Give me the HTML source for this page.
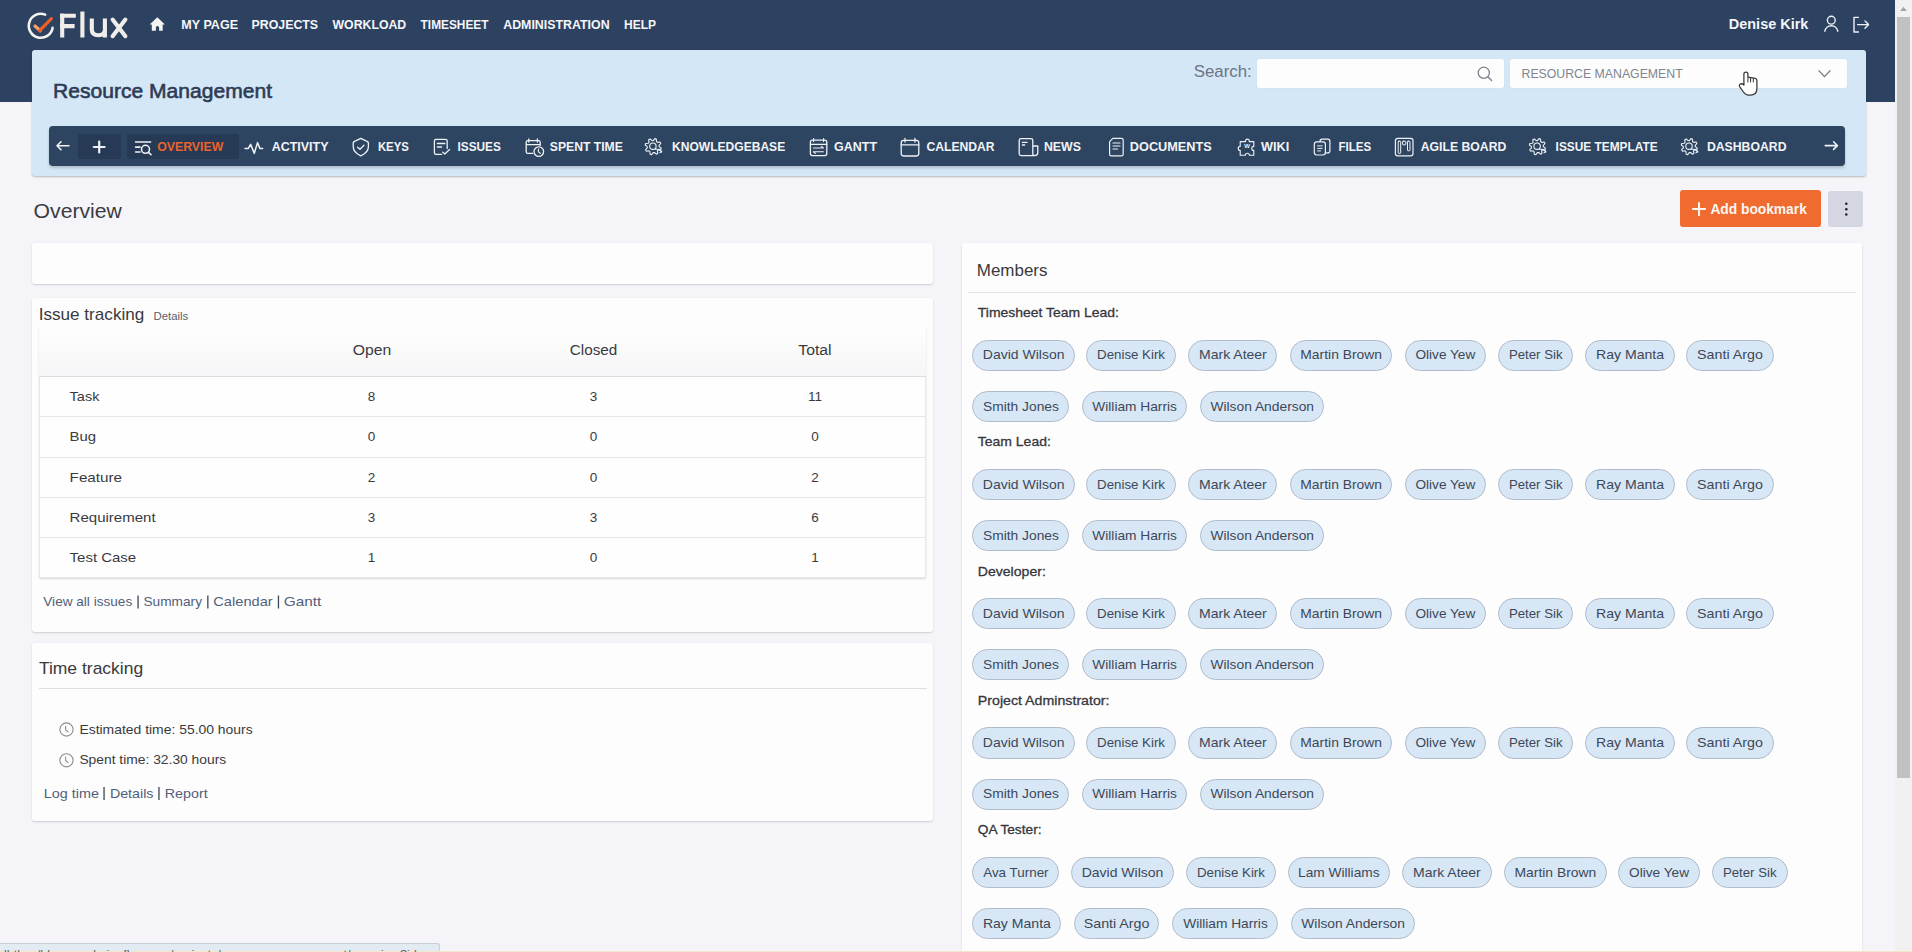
<!DOCTYPE html>
<html><head><meta charset="utf-8"><title>Resource Management - Overview</title>
<style>
html,body{margin:0;padding:0;width:1912px;height:952px;overflow:hidden;background:#f4f4f9;font-family:"Liberation Sans", sans-serif}
.a{position:absolute}
svg text{font-family:"Liberation Sans", sans-serif}
</style></head><body>
<div class="a" style="left:0px;top:0px;width:1895px;height:102px;background:#2d4260"></div>
<div class="a" style="left:32px;top:50px;width:1834px;height:126px;background:#d4e7f7;border-radius:3px;box-shadow:0 1px 2px rgba(0,0,0,.25)"></div>
<div class="a" style="left:1257px;top:58.5px;width:247px;height:29.5px;background:#fdfdfd;border-radius:2px;box-shadow:0 0 1px rgba(0,0,0,.15)"></div>
<div class="a" style="left:1510px;top:58.5px;width:336.5px;height:29.5px;background:#fdfdfd;border-radius:2px;box-shadow:0 0 1px rgba(0,0,0,.15)"></div>
<div class="a" style="left:48.5px;top:126.3px;width:1796.5px;height:39.3px;background:#2e4562;border-radius:4px;box-shadow:0 2px 3px rgba(0,0,0,.18)"></div>
<div class="a" style="left:78.4px;top:134.1px;width:42.4px;height:24.8px;background:#263a55;border-radius:2px"></div>
<div class="a" style="left:127.1px;top:134.1px;width:111.9px;height:24.8px;background:#263a55;border-radius:2px"></div>
<div class="a" style="left:1680px;top:190.3px;width:141px;height:37px;background:#ef6b2f;border-radius:3px"></div>
<div class="a" style="left:1827.6px;top:191px;width:35.1px;height:36.4px;background:#d4d7e2;border-radius:3px"></div>
<div class="a" style="left:32.4px;top:243.3px;width:900.6px;height:41px;background:#fdfdfd;border-radius:3px;box-shadow:0 1px 2px rgba(0,0,0,.16)"></div>
<div class="a" style="left:32.4px;top:297.7px;width:900.6px;height:334px;background:#fdfdfd;border-radius:3px;box-shadow:0 1px 2px rgba(0,0,0,.16)"></div>
<div class="a" style="left:32.4px;top:642.8px;width:900.6px;height:178.7px;background:#fdfdfd;border-radius:3px;box-shadow:0 1px 2px rgba(0,0,0,.16)"></div>
<div class="a" style="left:962px;top:242.8px;width:900px;height:740px;background:#fdfdfd;border-radius:3px;box-shadow:0 1px 2px rgba(0,0,0,.16)"></div>
<div class="a" style="left:39.2px;top:326.6px;width:886.8px;height:251.2px;background:#fefefe;border:1px solid #e8e8ec;box-sizing:border-box;border-radius:2px;box-shadow:0 1px 2px rgba(0,0,0,.16)"></div>
<div class="a" style="left:39.2px;top:326.6px;width:886.8px;height:50px;background:linear-gradient(#fdfdfd,#f6f6f8);border-bottom:1px solid #dcdcdf;box-sizing:border-box"></div>
<div class="a" style="left:39.2px;top:416.3px;width:886.8px;height:1px;background:#e6e6ea"></div>
<div class="a" style="left:39.2px;top:457.2px;width:886.8px;height:1px;background:#e6e6ea"></div>
<div class="a" style="left:39.2px;top:497.3px;width:886.8px;height:1px;background:#e6e6ea"></div>
<div class="a" style="left:39.2px;top:537.3px;width:886.8px;height:1px;background:#e6e6ea"></div>
<div class="a" style="left:39px;top:688.2px;width:887.8px;height:1.2px;background:#dedee3"></div>
<div class="a" style="left:968px;top:291.6px;width:887.7px;height:1.2px;background:#e0e0e5"></div>
<div class="a" style="left:1895px;top:0px;width:17px;height:952px;background:#f1f1f1"></div>
<div class="a" style="left:1897px;top:17px;width:13px;height:761px;background:#c1c1c1"></div>
<div class="a" style="left:0px;top:943px;width:439.5px;height:9px;background:#e2eaf2;border-top:1px solid #c8d0d8;border-right:1px solid #c8d0d8;border-top-right-radius:3px;box-sizing:border-box"></div>
<div class="a" style="left:0px;top:950.5px;width:1912px;height:1.5px;background:#f3e6cc"></div>
<div class="a" style="left:972.1px;top:339.5px;width:103.1px;height:31.2px;background:#d7e7f6;border:1px solid #b0bccb;border-radius:16px;box-sizing:border-box"></div>
<div class="a" style="left:1086.4px;top:339.5px;width:89.3px;height:31.2px;background:#d7e7f6;border:1px solid #b0bccb;border-radius:16px;box-sizing:border-box"></div>
<div class="a" style="left:1188.2px;top:339.5px;width:89.3px;height:31.2px;background:#d7e7f6;border:1px solid #b0bccb;border-radius:16px;box-sizing:border-box"></div>
<div class="a" style="left:1290px;top:339.5px;width:102.4px;height:31.2px;background:#d7e7f6;border:1px solid #b0bccb;border-radius:16px;box-sizing:border-box"></div>
<div class="a" style="left:1405.1px;top:339.5px;width:80.6px;height:31.2px;background:#d7e7f6;border:1px solid #b0bccb;border-radius:16px;box-sizing:border-box"></div>
<div class="a" style="left:1498.2px;top:339.5px;width:75px;height:31.2px;background:#d7e7f6;border:1px solid #b0bccb;border-radius:16px;box-sizing:border-box"></div>
<div class="a" style="left:1585.4px;top:339.5px;width:89.2px;height:31.2px;background:#d7e7f6;border:1px solid #b0bccb;border-radius:16px;box-sizing:border-box"></div>
<div class="a" style="left:1686.2px;top:339.5px;width:87.6px;height:31.2px;background:#d7e7f6;border:1px solid #b0bccb;border-radius:16px;box-sizing:border-box"></div>
<div class="a" style="left:972.4px;top:390.7px;width:97.1px;height:31.2px;background:#d7e7f6;border:1px solid #b0bccb;border-radius:16px;box-sizing:border-box"></div>
<div class="a" style="left:1081.7px;top:390.7px;width:105.8px;height:31.2px;background:#d7e7f6;border:1px solid #b0bccb;border-radius:16px;box-sizing:border-box"></div>
<div class="a" style="left:1200.1px;top:390.7px;width:124.2px;height:31.2px;background:#d7e7f6;border:1px solid #b0bccb;border-radius:16px;box-sizing:border-box"></div>
<div class="a" style="left:972.1px;top:468.8px;width:103.1px;height:31.2px;background:#d7e7f6;border:1px solid #b0bccb;border-radius:16px;box-sizing:border-box"></div>
<div class="a" style="left:1086.4px;top:468.8px;width:89.3px;height:31.2px;background:#d7e7f6;border:1px solid #b0bccb;border-radius:16px;box-sizing:border-box"></div>
<div class="a" style="left:1188.2px;top:468.8px;width:89.3px;height:31.2px;background:#d7e7f6;border:1px solid #b0bccb;border-radius:16px;box-sizing:border-box"></div>
<div class="a" style="left:1290px;top:468.8px;width:102.4px;height:31.2px;background:#d7e7f6;border:1px solid #b0bccb;border-radius:16px;box-sizing:border-box"></div>
<div class="a" style="left:1405.1px;top:468.8px;width:80.6px;height:31.2px;background:#d7e7f6;border:1px solid #b0bccb;border-radius:16px;box-sizing:border-box"></div>
<div class="a" style="left:1498.2px;top:468.8px;width:75px;height:31.2px;background:#d7e7f6;border:1px solid #b0bccb;border-radius:16px;box-sizing:border-box"></div>
<div class="a" style="left:1585.4px;top:468.8px;width:89.2px;height:31.2px;background:#d7e7f6;border:1px solid #b0bccb;border-radius:16px;box-sizing:border-box"></div>
<div class="a" style="left:1686.2px;top:468.8px;width:87.6px;height:31.2px;background:#d7e7f6;border:1px solid #b0bccb;border-radius:16px;box-sizing:border-box"></div>
<div class="a" style="left:972.4px;top:520.0px;width:97.1px;height:31.2px;background:#d7e7f6;border:1px solid #b0bccb;border-radius:16px;box-sizing:border-box"></div>
<div class="a" style="left:1081.7px;top:520.0px;width:105.8px;height:31.2px;background:#d7e7f6;border:1px solid #b0bccb;border-radius:16px;box-sizing:border-box"></div>
<div class="a" style="left:1200.1px;top:520.0px;width:124.2px;height:31.2px;background:#d7e7f6;border:1px solid #b0bccb;border-radius:16px;box-sizing:border-box"></div>
<div class="a" style="left:972.1px;top:598.1px;width:103.1px;height:31.2px;background:#d7e7f6;border:1px solid #b0bccb;border-radius:16px;box-sizing:border-box"></div>
<div class="a" style="left:1086.4px;top:598.1px;width:89.3px;height:31.2px;background:#d7e7f6;border:1px solid #b0bccb;border-radius:16px;box-sizing:border-box"></div>
<div class="a" style="left:1188.2px;top:598.1px;width:89.3px;height:31.2px;background:#d7e7f6;border:1px solid #b0bccb;border-radius:16px;box-sizing:border-box"></div>
<div class="a" style="left:1290px;top:598.1px;width:102.4px;height:31.2px;background:#d7e7f6;border:1px solid #b0bccb;border-radius:16px;box-sizing:border-box"></div>
<div class="a" style="left:1405.1px;top:598.1px;width:80.6px;height:31.2px;background:#d7e7f6;border:1px solid #b0bccb;border-radius:16px;box-sizing:border-box"></div>
<div class="a" style="left:1498.2px;top:598.1px;width:75px;height:31.2px;background:#d7e7f6;border:1px solid #b0bccb;border-radius:16px;box-sizing:border-box"></div>
<div class="a" style="left:1585.4px;top:598.1px;width:89.2px;height:31.2px;background:#d7e7f6;border:1px solid #b0bccb;border-radius:16px;box-sizing:border-box"></div>
<div class="a" style="left:1686.2px;top:598.1px;width:87.6px;height:31.2px;background:#d7e7f6;border:1px solid #b0bccb;border-radius:16px;box-sizing:border-box"></div>
<div class="a" style="left:972.4px;top:649.3px;width:97.1px;height:31.2px;background:#d7e7f6;border:1px solid #b0bccb;border-radius:16px;box-sizing:border-box"></div>
<div class="a" style="left:1081.7px;top:649.3px;width:105.8px;height:31.2px;background:#d7e7f6;border:1px solid #b0bccb;border-radius:16px;box-sizing:border-box"></div>
<div class="a" style="left:1200.1px;top:649.3px;width:124.2px;height:31.2px;background:#d7e7f6;border:1px solid #b0bccb;border-radius:16px;box-sizing:border-box"></div>
<div class="a" style="left:972.1px;top:727.4px;width:103.1px;height:31.2px;background:#d7e7f6;border:1px solid #b0bccb;border-radius:16px;box-sizing:border-box"></div>
<div class="a" style="left:1086.4px;top:727.4px;width:89.3px;height:31.2px;background:#d7e7f6;border:1px solid #b0bccb;border-radius:16px;box-sizing:border-box"></div>
<div class="a" style="left:1188.2px;top:727.4px;width:89.3px;height:31.2px;background:#d7e7f6;border:1px solid #b0bccb;border-radius:16px;box-sizing:border-box"></div>
<div class="a" style="left:1290px;top:727.4px;width:102.4px;height:31.2px;background:#d7e7f6;border:1px solid #b0bccb;border-radius:16px;box-sizing:border-box"></div>
<div class="a" style="left:1405.1px;top:727.4px;width:80.6px;height:31.2px;background:#d7e7f6;border:1px solid #b0bccb;border-radius:16px;box-sizing:border-box"></div>
<div class="a" style="left:1498.2px;top:727.4px;width:75px;height:31.2px;background:#d7e7f6;border:1px solid #b0bccb;border-radius:16px;box-sizing:border-box"></div>
<div class="a" style="left:1585.4px;top:727.4px;width:89.2px;height:31.2px;background:#d7e7f6;border:1px solid #b0bccb;border-radius:16px;box-sizing:border-box"></div>
<div class="a" style="left:1686.2px;top:727.4px;width:87.6px;height:31.2px;background:#d7e7f6;border:1px solid #b0bccb;border-radius:16px;box-sizing:border-box"></div>
<div class="a" style="left:972.4px;top:778.6px;width:97.1px;height:31.2px;background:#d7e7f6;border:1px solid #b0bccb;border-radius:16px;box-sizing:border-box"></div>
<div class="a" style="left:1081.7px;top:778.6px;width:105.8px;height:31.2px;background:#d7e7f6;border:1px solid #b0bccb;border-radius:16px;box-sizing:border-box"></div>
<div class="a" style="left:1200.1px;top:778.6px;width:124.2px;height:31.2px;background:#d7e7f6;border:1px solid #b0bccb;border-radius:16px;box-sizing:border-box"></div>
<div class="a" style="left:972.4px;top:856.7px;width:87px;height:31.2px;background:#d7e7f6;border:1px solid #b0bccb;border-radius:16px;box-sizing:border-box"></div>
<div class="a" style="left:1071.4px;top:856.7px;width:102.2px;height:31.2px;background:#d7e7f6;border:1px solid #b0bccb;border-radius:16px;box-sizing:border-box"></div>
<div class="a" style="left:1186.2px;top:856.7px;width:89.4px;height:31.2px;background:#d7e7f6;border:1px solid #b0bccb;border-radius:16px;box-sizing:border-box"></div>
<div class="a" style="left:1288px;top:856.7px;width:101.7px;height:31.2px;background:#d7e7f6;border:1px solid #b0bccb;border-radius:16px;box-sizing:border-box"></div>
<div class="a" style="left:1402.2px;top:856.7px;width:89.5px;height:31.2px;background:#d7e7f6;border:1px solid #b0bccb;border-radius:16px;box-sizing:border-box"></div>
<div class="a" style="left:1504.2px;top:856.7px;width:102.5px;height:31.2px;background:#d7e7f6;border:1px solid #b0bccb;border-radius:16px;box-sizing:border-box"></div>
<div class="a" style="left:1618.4px;top:856.7px;width:81.2px;height:31.2px;background:#d7e7f6;border:1px solid #b0bccb;border-radius:16px;box-sizing:border-box"></div>
<div class="a" style="left:1712px;top:856.7px;width:75.5px;height:31.2px;background:#d7e7f6;border:1px solid #b0bccb;border-radius:16px;box-sizing:border-box"></div>
<div class="a" style="left:972.4px;top:907.9px;width:89px;height:31.2px;background:#d7e7f6;border:1px solid #b0bccb;border-radius:16px;box-sizing:border-box"></div>
<div class="a" style="left:1073.7px;top:907.9px;width:85.8px;height:31.2px;background:#d7e7f6;border:1px solid #b0bccb;border-radius:16px;box-sizing:border-box"></div>
<div class="a" style="left:1172.4px;top:907.9px;width:106.1px;height:31.2px;background:#d7e7f6;border:1px solid #b0bccb;border-radius:16px;box-sizing:border-box"></div>
<div class="a" style="left:1291px;top:907.9px;width:124.2px;height:31.2px;background:#d7e7f6;border:1px solid #b0bccb;border-radius:16px;box-sizing:border-box"></div>
<svg class="a" style="left:0;top:0" width="1912" height="952" viewBox="0 0 1912 952">
<rect x="137.4" y="595.5" width="1.3" height="13" fill="#3e4656"/>
<rect x="207.2" y="595.5" width="1.3" height="13" fill="#3e4656"/>
<rect x="277.8" y="595.5" width="1.3" height="13" fill="#3e4656"/>
<rect x="103.4" y="787" width="1.3" height="13" fill="#3e4656"/>
<rect x="158.3" y="787" width="1.3" height="13" fill="#3e4656"/>
<circle cx="66.5" cy="729.5" r="6.6" fill="none" stroke="#8a8d93" stroke-width="1.1"/><path d="M65.6 725.9 V729.7 L68.4 732.1" fill="none" stroke="#8a8d93" stroke-width="1.1"/>
<circle cx="66.5" cy="760.3" r="6.6" fill="none" stroke="#8a8d93" stroke-width="1.1"/><path d="M65.6 756.7 V760.5 L68.4 762.9" fill="none" stroke="#8a8d93" stroke-width="1.1"/>
<path d="M45.2 14.6 A12 12 0 1 0 52.6 27.9" fill="none" stroke="#f4f2ef" stroke-width="2.6" stroke-linecap="round"/>
<path d="M35 26 L40.4 30.8" fill="none" stroke="#f4a070" stroke-width="3.2" stroke-linecap="round"/><path d="M39.6 30.6 L51.4 18.6" fill="none" stroke="#ee5f24" stroke-width="3.2" stroke-linecap="round"/>
<path d="M62.2 37.4 V13.5 M60 15.7 H75.8 M60 26.1 H74.6 M82.4 11.5 V37.4" fill="none" stroke="#f1eee9" stroke-width="4.1"/>
<path d="M91.8 18.4 V29.6 Q91.8 35.3 98.4 35.3 Q104.9 35.3 104.9 29.6 M104.9 18.4 V37.4" fill="none" stroke="#f1eee9" stroke-width="4.1"/>
<path d="M112.6 19.6 L125.4 36.2 M125.4 19.6 L112.6 36.2" fill="none" stroke="#f1eee9" stroke-width="4.1" stroke-linecap="round"/>
<path d="M157.3 17.3 L149.7 24.4 L151.8 24.4 V30.8 H155.9 V27.6 Q155.9 26.1 157.5 26.1 Q159.1 26.1 159.1 27.6 V30.8 H162.7 V24.4 L164.9 24.4 Z" fill="#f4f4f2"/>
<circle cx="1831.3" cy="20.2" r="3.9" fill="none" stroke="#eef1f6" stroke-linecap="round" stroke-linejoin="round" stroke-width="1.4"/><path d="M1824.8 31.2 A6.6 6.6 0 0 1 1837.8 31.2" fill="none" stroke="#eef1f6" stroke-linecap="round" stroke-linejoin="round" stroke-width="1.4"/>
<path d="M1858.4 17.4 H1854 V32 H1858.4 M1857.6 24.6 H1868.4 M1865 21 L1868.6 24.6 L1865 28.2" fill="none" stroke="#eef1f6" stroke-linecap="round" stroke-linejoin="round" stroke-width="1.4"/>
<circle cx="1483.8" cy="72.8" r="5.6" fill="none" stroke="#7a7f89" stroke-width="1.3"/><path d="M1488 77 L1491.6 80.4" stroke="#7a7f89" stroke-width="1.4" stroke-linecap="round"/>
<path d="M1818.6 70.4 L1824.4 76.6 L1830.4 70.4" fill="none" stroke="#6f747e" stroke-width="1.3"/>
<path d="M1743.9 85 V74.1 Q1743.9 72.1 1745.9 72.1 Q1747.9 72.1 1747.9 74.1 V77.2 L1755.2 78.4 Q1756.9 78.8 1756.9 80.6 V88.6 Q1756.9 95.2 1750.2 95.2 H1748.6 Q1745.6 95.2 1743.4 92 L1739.6 86.6 Q1738.8 85 1740.2 84 Q1741.8 83.2 1743.9 85 Z" fill="#ffffff" stroke="#36373a" stroke-width="1.25" stroke-linejoin="round"/>
<path d="M1747.9 77.4 V82.4 M1750.6 77.8 V82.4 M1753.3 78.2 V82.4" stroke="#36373a" stroke-width="1"/>
<path d="M57 145.8 H69 M57 145.8 L61 141.8 M57 145.8 L61 149.8" fill="none" stroke="#eef1f6" stroke-linecap="round" stroke-linejoin="round" stroke-width="1.6"/>
<path d="M99.2 141.6 V152.4 M93.8 147 H104.6" fill="none" stroke="#eef1f6" stroke-linecap="round" stroke-linejoin="round" stroke-width="2.2"/>
<path d="M1825.2 145.6 H1837.4 M1837.4 145.6 L1833.6 141.8 M1837.4 145.6 L1833.6 149.4" fill="none" stroke="#eef1f6" stroke-linecap="round" stroke-linejoin="round" stroke-width="1.6"/>
<path d="M135.6 142 H150.6 M135.6 147.1 H140 M135.6 152 H140" fill="none" stroke="#eef1f6" stroke-linecap="round" stroke-linejoin="round" stroke-width="1.6"/><circle cx="145.5" cy="149.3" r="4" fill="none" stroke="#eef1f6" stroke-linecap="round" stroke-linejoin="round" stroke-width="1.6"/><path d="M148.4 152.3 L151 154.6" fill="none" stroke="#eef1f6" stroke-linecap="round" stroke-linejoin="round" stroke-width="1.6"/>
<path d="M245 148.4 H248.3 L250.6 144.4 L254.3 153.4 L257.5 142.6 L259.9 148.4 H262.7" fill="none" stroke="#eef1f6" stroke-linecap="round" stroke-linejoin="round" stroke-width="1.5"/>
<path d="M360.8 138.4 L366 140.8 Q368.4 141.2 368.4 143.4 V146.6 Q368.4 152.6 360.8 155.8 Q353.2 152.6 353.2 146.6 V143.4 Q353.2 141.2 355.6 140.8 Z" fill="none" stroke="#eef1f6" stroke-linecap="round" stroke-linejoin="round" stroke-width="1.3"/><path d="M357.6 147.2 L360 149.2 L364 145.2" fill="none" stroke="#eef1f6" stroke-linecap="round" stroke-linejoin="round" stroke-width="1.3"/>
<path d="M441.6 154.4 H436 Q434.4 154.4 434.4 152.8 V141 Q434.4 139.4 436 139.4 H445.6 Q447.2 139.4 447.2 141 V148.6 M437.4 143.5 H444.8 M437.4 147 H441.6 M442.8 152.2 L444.8 154 L449.6 149.6" fill="none" stroke="#eef1f6" stroke-linecap="round" stroke-linejoin="round" stroke-width="1.3"/>
<path d="M532.6 153.4 H527.8 Q526.2 153.4 526.2 151.8 V142.2 Q526.2 140.6 527.8 140.6 H538.6 Q540.2 140.6 540.2 142.2 V145.6 M526.2 144.6 H540.2 M528.8 139 V142 M537.4 139 V142" fill="none" stroke="#eef1f6" stroke-linecap="round" stroke-linejoin="round" stroke-width="1.3"/><circle cx="538.8" cy="151.6" r="4.8" fill="none" stroke="#eef1f6" stroke-linecap="round" stroke-linejoin="round" stroke-width="1.3"/><path d="M538.4 149 V151.8 L540.4 153.4" fill="none" stroke="#eef1f6" stroke-linecap="round" stroke-linejoin="round" stroke-width="1.1"/>
<path d="M653.2 140.6 L654.8 138.6 L656.3 139.0 L656.5 141.6 L657.4 142.4 L660.0 142.0 L660.8 143.5 L659.1 145.4 L659.2 146.6 L661.2 148.2 L660.8 149.7 L658.2 149.9 L657.4 150.8 L657.8 153.4 L656.3 154.2 L654.4 152.5 L653.2 152.6 L651.6 154.6 L650.1 154.2 L649.9 151.6 L649.0 150.8 L646.4 151.2 L645.6 149.7 L647.3 147.8 L647.2 146.6 L645.2 145.0 L645.6 143.5 L648.2 143.3 L649.0 142.4 L648.6 139.8 L650.1 139.0 L652.0 140.7 Z" fill="none" stroke="#eef1f6" stroke-linecap="round" stroke-linejoin="round" stroke-width="1.1"/><circle cx="652.9" cy="146.2" r="3.2" fill="none" stroke="#eef1f6" stroke-linecap="round" stroke-linejoin="round" stroke-width="1.1"/><path d="M655.4 149.2 L658.4 149.2 L661.8 151.8 M660.4 150.0 L661.8 151.8 L659.8 152.8" fill="none" stroke="#eef1f6" stroke-linecap="round" stroke-linejoin="round" stroke-width="1.1"/>
<path d="M1537.4 140.6 L1539.0 138.6 L1540.5 139.0 L1540.7 141.6 L1541.6 142.4 L1544.2 142.0 L1545.0 143.5 L1543.3 145.4 L1543.4 146.6 L1545.4 148.2 L1545.0 149.7 L1542.4 149.9 L1541.6 150.8 L1542.0 153.4 L1540.5 154.2 L1538.6 152.5 L1537.4 152.6 L1535.8 154.6 L1534.3 154.2 L1534.1 151.6 L1533.2 150.8 L1530.6 151.2 L1529.8 149.7 L1531.5 147.8 L1531.4 146.6 L1529.4 145.0 L1529.8 143.5 L1532.4 143.3 L1533.2 142.4 L1532.8 139.8 L1534.3 139.0 L1536.2 140.7 Z" fill="none" stroke="#eef1f6" stroke-linecap="round" stroke-linejoin="round" stroke-width="1.1"/><circle cx="1537.1" cy="146.2" r="3.2" fill="none" stroke="#eef1f6" stroke-linecap="round" stroke-linejoin="round" stroke-width="1.1"/><path d="M1539.6 149.2 L1542.6 149.2 L1546.0 151.8 M1544.6 150.0 L1546.0 151.8 L1544.0 152.8" fill="none" stroke="#eef1f6" stroke-linecap="round" stroke-linejoin="round" stroke-width="1.1"/>
<path d="M1689.3 140.6 L1690.9 138.6 L1692.4 139.0 L1692.6 141.6 L1693.5 142.4 L1696.1 142.0 L1696.9 143.5 L1695.2 145.4 L1695.3 146.6 L1697.3 148.2 L1696.9 149.7 L1694.3 149.9 L1693.5 150.8 L1693.9 153.4 L1692.4 154.2 L1690.5 152.5 L1689.3 152.6 L1687.7 154.6 L1686.2 154.2 L1686.0 151.6 L1685.1 150.8 L1682.5 151.2 L1681.7 149.7 L1683.4 147.8 L1683.3 146.6 L1681.3 145.0 L1681.7 143.5 L1684.3 143.3 L1685.1 142.4 L1684.7 139.8 L1686.2 139.0 L1688.1 140.7 Z" fill="none" stroke="#eef1f6" stroke-linecap="round" stroke-linejoin="round" stroke-width="1.1"/><circle cx="1689.0" cy="146.2" r="3.2" fill="none" stroke="#eef1f6" stroke-linecap="round" stroke-linejoin="round" stroke-width="1.1"/><path d="M1691.5 149.2 L1694.5 149.2 L1697.9 151.8 M1696.5 150.0 L1697.9 151.8 L1695.9 152.8" fill="none" stroke="#eef1f6" stroke-linecap="round" stroke-linejoin="round" stroke-width="1.1"/>
<rect x="810.4" y="140.2" width="16.4" height="15.4" rx="2" fill="none" stroke="#eef1f6" stroke-linecap="round" stroke-linejoin="round" stroke-width="1.3"/><path d="M810.4 144.4 H826.8 M813.6 138.6 V141.6 M823.6 138.6 V141.6 M813.4 148 H823.4 L821.4 146.4 M823.4 151.8 H813.4 L815.4 153.4" fill="none" stroke="#eef1f6" stroke-linecap="round" stroke-linejoin="round" stroke-width="1.1"/>
<rect x="901.2" y="140.4" width="17.6" height="15.6" rx="2.4" fill="none" stroke="#eef1f6" stroke-linecap="round" stroke-linejoin="round" stroke-width="1.3"/><path d="M901.2 144.8 H918.8 M905 138.4 V142 M915 138.4 V142" fill="none" stroke="#eef1f6" stroke-linecap="round" stroke-linejoin="round" stroke-width="1.3"/>
<path d="M1033.8 155.6 H1021 Q1019.2 155.6 1019.2 153.8 V140.4 Q1019.2 138.6 1021 138.6 H1031 Q1032.8 138.6 1032.8 140.4 V153.6 Q1032.8 155.6 1034.8 155.6 Q1037.8 155.6 1037.8 152.8 V146 H1032.8 M1022.4 142.4 H1027 M1022.4 145 H1024.6" fill="none" stroke="#eef1f6" stroke-linecap="round" stroke-linejoin="round" stroke-width="1.3"/>
<path d="M1112.8 138.4 H1121.6 Q1123.2 138.4 1123.2 140 V154.2 Q1123.2 155.8 1121.6 155.8 H1111.2 Q1109.6 155.8 1109.6 154.2 V141.6 Z M1113 143 H1120 M1113 146 H1120 M1113 149 H1117.6" fill="none" stroke="#eef1f6" stroke-linecap="round" stroke-linejoin="round" stroke-width="1.2"/>
<path d="M1240.2 141.6 H1245.6 A1.9 1.9 0 1 1 1249.2 141.6 H1253.8 V146.4 A2 2 0 1 0 1253.8 150.4 V155.2 H1249.4 A2 2 0 1 0 1245.4 155.2 H1240.2 V150.4 A2 2 0 1 1 1240.2 146.4 Z" fill="none" stroke="#eef1f6" stroke-linecap="round" stroke-linejoin="round" stroke-width="1.1"/><text x="1247" y="147.6" font-size="6" font-weight="bold" fill="#eef1f6" text-anchor="middle">W</text>
<rect x="1320" y="139.2" width="9.9" height="13.7" rx="2.2" fill="none" stroke="#eef1f6" stroke-linecap="round" stroke-linejoin="round" stroke-width="1.2"/><rect x="1314.3" y="141.9" width="11.1" height="13.1" rx="2.4" fill="#2e4562" stroke="#eef1f6" stroke-width="1.2"/><path d="M1317.6 145.9 H1322.2 M1317.6 148.4 H1322.2 M1317.6 150.9 H1320.6" fill="none" stroke="#eef1f6" stroke-linecap="round" stroke-linejoin="round" stroke-width="1"/>
<rect x="1395.4" y="138.4" width="17.6" height="17.4" rx="2.4" fill="none" stroke="#eef1f6" stroke-linecap="round" stroke-linejoin="round" stroke-width="1.2"/><rect x="1398.2" y="141.2" width="2.5" height="12.2" rx="0.6" fill="none" stroke="#eef1f6" stroke-linecap="round" stroke-linejoin="round" stroke-width="1"/><rect x="1402.6" y="141.2" width="3.2" height="3.6" rx="0.6" fill="none" stroke="#eef1f6" stroke-linecap="round" stroke-linejoin="round" stroke-width="1"/><rect x="1407.5" y="141.2" width="2.5" height="9.6" rx="0.6" fill="none" stroke="#eef1f6" stroke-linecap="round" stroke-linejoin="round" stroke-width="1"/>
<circle cx="1846.3" cy="203.8" r="1.25" fill="#1c1d22"/>
<circle cx="1846.3" cy="209.2" r="1.25" fill="#1c1d22"/>
<circle cx="1846.3" cy="214.6" r="1.25" fill="#1c1d22"/>
<path d="M1699 203 V215.2 M1692.9 209.1 H1705.1" stroke="#fdf6f2" stroke-width="2" stroke-linecap="round"/>
<path d="M1900.2 11 L1903.5 6.8 L1906.8 11 Z" fill="#a3a3a3"/>
<text x="181.3" y="29.3" font-size="13.5" font-weight="bold" fill="#f4f6fa" textLength="56.8" lengthAdjust="spacingAndGlyphs">MY PAGE</text>
<text x="251.6" y="29.3" font-size="13.5" font-weight="bold" fill="#f4f6fa" textLength="66.5" lengthAdjust="spacingAndGlyphs">PROJECTS</text>
<text x="332.5" y="29.3" font-size="13.5" font-weight="bold" fill="#f4f6fa" textLength="73.7" lengthAdjust="spacingAndGlyphs">WORKLOAD</text>
<text x="420.6" y="29.3" font-size="13.5" font-weight="bold" fill="#f4f6fa" textLength="67.9" lengthAdjust="spacingAndGlyphs">TIMESHEET</text>
<text x="503.2" y="29.3" font-size="13.5" font-weight="bold" fill="#f4f6fa" textLength="106.4" lengthAdjust="spacingAndGlyphs">ADMINISTRATION</text>
<text x="624.0" y="29.3" font-size="13.5" font-weight="bold" fill="#f4f6fa" textLength="32.0" lengthAdjust="spacingAndGlyphs">HELP</text>
<text x="1728.8" y="29.3" font-size="14.5" font-weight="bold" fill="#f4f6fa" textLength="79.6" lengthAdjust="spacingAndGlyphs">Denise Kirk</text>
<text x="53.0" y="97.5" font-size="20.5" fill="#2d3b55" textLength="219.0" lengthAdjust="spacingAndGlyphs" stroke="#2d3b55" stroke-width="0.6">Resource Management</text>
<text x="1193.7" y="76.6" font-size="16" fill="#6e7482" textLength="58.0" lengthAdjust="spacingAndGlyphs">Search:</text>
<text x="1521.5" y="78.4" font-size="13" fill="#80858f" textLength="161.2" lengthAdjust="spacingAndGlyphs">RESOURCE MANAGEMENT</text>
<text x="157.2" y="151.4" font-size="13" font-weight="bold" fill="#e9632b" textLength="66.1" lengthAdjust="spacingAndGlyphs">OVERVIEW</text>
<text x="271.7" y="151.4" font-size="13" font-weight="bold" fill="#f2f4f8" textLength="56.8" lengthAdjust="spacingAndGlyphs">ACTIVITY</text>
<text x="377.9" y="151.4" font-size="13" font-weight="bold" fill="#f2f4f8" textLength="30.9" lengthAdjust="spacingAndGlyphs">KEYS</text>
<text x="457.5" y="151.4" font-size="13" font-weight="bold" fill="#f2f4f8" textLength="43.4" lengthAdjust="spacingAndGlyphs">ISSUES</text>
<text x="549.8" y="151.4" font-size="13" font-weight="bold" fill="#f2f4f8" textLength="73.1" lengthAdjust="spacingAndGlyphs">SPENT TIME</text>
<text x="672.0" y="151.4" font-size="13" font-weight="bold" fill="#f2f4f8" textLength="113.2" lengthAdjust="spacingAndGlyphs">KNOWLEDGEBASE</text>
<text x="834.1" y="151.4" font-size="13" font-weight="bold" fill="#f2f4f8" textLength="43.0" lengthAdjust="spacingAndGlyphs">GANTT</text>
<text x="926.5" y="151.4" font-size="13" font-weight="bold" fill="#f2f4f8" textLength="68.1" lengthAdjust="spacingAndGlyphs">CALENDAR</text>
<text x="1043.9" y="151.4" font-size="13" font-weight="bold" fill="#f2f4f8" textLength="37.0" lengthAdjust="spacingAndGlyphs">NEWS</text>
<text x="1129.8" y="151.4" font-size="13" font-weight="bold" fill="#f2f4f8" textLength="82.0" lengthAdjust="spacingAndGlyphs">DOCUMENTS</text>
<text x="1261.0" y="151.4" font-size="13" font-weight="bold" fill="#f2f4f8" textLength="28.2" lengthAdjust="spacingAndGlyphs">WIKI</text>
<text x="1338.4" y="151.4" font-size="13" font-weight="bold" fill="#f2f4f8" textLength="32.8" lengthAdjust="spacingAndGlyphs">FILES</text>
<text x="1420.7" y="151.4" font-size="13" font-weight="bold" fill="#f2f4f8" textLength="85.6" lengthAdjust="spacingAndGlyphs">AGILE BOARD</text>
<text x="1555.6" y="151.4" font-size="13" font-weight="bold" fill="#f2f4f8" textLength="102.0" lengthAdjust="spacingAndGlyphs">ISSUE TEMPLATE</text>
<text x="1706.9" y="151.4" font-size="13" font-weight="bold" fill="#f2f4f8" textLength="79.6" lengthAdjust="spacingAndGlyphs">DASHBOARD</text>
<text x="33.6" y="218.0" font-size="21" fill="#3b3b3f" textLength="88.2" lengthAdjust="spacingAndGlyphs">Overview</text>
<text x="1710.4" y="214.3" font-size="14" font-weight="bold" fill="#fdf6f2" textLength="96.4" lengthAdjust="spacingAndGlyphs">Add bookmark</text>
<text x="38.7" y="319.7" font-size="17" fill="#3a3a3e" textLength="105.6" lengthAdjust="spacingAndGlyphs">Issue tracking</text>
<text x="153.6" y="319.7" font-size="11" fill="#59606c" textLength="34.6" lengthAdjust="spacingAndGlyphs">Details</text>
<text x="352.7" y="355.3" font-size="14" fill="#3a3a3e" textLength="38.5" lengthAdjust="spacingAndGlyphs">Open</text>
<text x="569.8" y="355.3" font-size="14" fill="#3a3a3e" textLength="47.5" lengthAdjust="spacingAndGlyphs">Closed</text>
<text x="798.3" y="355.3" font-size="14" fill="#3a3a3e" textLength="33.3" lengthAdjust="spacingAndGlyphs">Total</text>
<text x="69.6" y="401.0" font-size="13.5" fill="#3a3a3e" textLength="29.8" lengthAdjust="spacingAndGlyphs">Task</text>
<text x="371.5" y="401" font-size="13.5" fill="#3a3a3e" text-anchor="middle">8</text>
<text x="593.5" y="401" font-size="13.5" fill="#3a3a3e" text-anchor="middle">3</text>
<text x="815" y="401" font-size="13.5" fill="#3a3a3e" text-anchor="middle">11</text>
<text x="69.6" y="441.0" font-size="13.5" fill="#3a3a3e" textLength="26.6" lengthAdjust="spacingAndGlyphs">Bug</text>
<text x="371.5" y="441" font-size="13.5" fill="#3a3a3e" text-anchor="middle">0</text>
<text x="593.5" y="441" font-size="13.5" fill="#3a3a3e" text-anchor="middle">0</text>
<text x="815" y="441" font-size="13.5" fill="#3a3a3e" text-anchor="middle">0</text>
<text x="69.6" y="482.0" font-size="13.5" fill="#3a3a3e" textLength="52.5" lengthAdjust="spacingAndGlyphs">Feature</text>
<text x="371.5" y="482" font-size="13.5" fill="#3a3a3e" text-anchor="middle">2</text>
<text x="593.5" y="482" font-size="13.5" fill="#3a3a3e" text-anchor="middle">0</text>
<text x="815" y="482" font-size="13.5" fill="#3a3a3e" text-anchor="middle">2</text>
<text x="69.6" y="521.6" font-size="13.5" fill="#3a3a3e" textLength="86.0" lengthAdjust="spacingAndGlyphs">Requirement</text>
<text x="371.5" y="521.6" font-size="13.5" fill="#3a3a3e" text-anchor="middle">3</text>
<text x="593.5" y="521.6" font-size="13.5" fill="#3a3a3e" text-anchor="middle">3</text>
<text x="815" y="521.6" font-size="13.5" fill="#3a3a3e" text-anchor="middle">6</text>
<text x="69.6" y="561.8" font-size="13.5" fill="#3a3a3e" textLength="66.6" lengthAdjust="spacingAndGlyphs">Test Case</text>
<text x="371.5" y="561.8" font-size="13.5" fill="#3a3a3e" text-anchor="middle">1</text>
<text x="593.5" y="561.8" font-size="13.5" fill="#3a3a3e" text-anchor="middle">0</text>
<text x="815" y="561.8" font-size="13.5" fill="#3a3a3e" text-anchor="middle">1</text>
<text x="43.3" y="606.0" font-size="13.5" fill="#52607a" textLength="88.9" lengthAdjust="spacingAndGlyphs">View all issues</text>
<text x="143.5" y="606.0" font-size="13.5" fill="#52607a" textLength="58.5" lengthAdjust="spacingAndGlyphs">Summary</text>
<text x="213.3" y="606.0" font-size="13.5" fill="#52607a" textLength="59.4" lengthAdjust="spacingAndGlyphs">Calendar</text>
<text x="283.7" y="606.0" font-size="13.5" fill="#52607a" textLength="37.6" lengthAdjust="spacingAndGlyphs">Gantt</text>
<text x="38.9" y="673.7" font-size="17" fill="#3a3a3e" textLength="104.3" lengthAdjust="spacingAndGlyphs">Time tracking</text>
<text x="79.4" y="733.7" font-size="13.5" fill="#3a3a3e" textLength="173.3" lengthAdjust="spacingAndGlyphs">Estimated time: 55.00 hours</text>
<text x="79.4" y="763.9" font-size="13.5" fill="#3a3a3e" textLength="146.8" lengthAdjust="spacingAndGlyphs">Spent time: 32.30 hours</text>
<text x="43.7" y="797.7" font-size="13.5" fill="#52607a" textLength="55.2" lengthAdjust="spacingAndGlyphs">Log time</text>
<text x="109.9" y="797.7" font-size="13.5" fill="#52607a" textLength="43.6" lengthAdjust="spacingAndGlyphs">Details</text>
<text x="164.7" y="797.7" font-size="13.5" fill="#52607a" textLength="43.0" lengthAdjust="spacingAndGlyphs">Report</text>
<text x="976.8" y="276.3" font-size="17" fill="#3a3a3e" textLength="70.7" lengthAdjust="spacingAndGlyphs">Members</text>
<text x="977.8" y="317.0" font-size="13.5" fill="#36363c" textLength="141.0" lengthAdjust="spacingAndGlyphs" stroke="#36363c" stroke-width="0.3">Timesheet Team Lead:</text>
<text x="982.8" y="359.3" font-size="13.5" fill="#3d4757" textLength="81.7" lengthAdjust="spacingAndGlyphs">David Wilson</text>
<text x="1097.1" y="359.3" font-size="13.5" fill="#3d4757" textLength="67.9" lengthAdjust="spacingAndGlyphs">Denise Kirk</text>
<text x="1199.0" y="359.3" font-size="13.5" fill="#3d4757" textLength="67.8" lengthAdjust="spacingAndGlyphs">Mark Ateer</text>
<text x="1300.3" y="359.3" font-size="13.5" fill="#3d4757" textLength="81.8" lengthAdjust="spacingAndGlyphs">Martin Brown</text>
<text x="1415.4" y="359.3" font-size="13.5" fill="#3d4757" textLength="59.9" lengthAdjust="spacingAndGlyphs">Olive Yew</text>
<text x="1508.9" y="359.3" font-size="13.5" fill="#3d4757" textLength="53.7" lengthAdjust="spacingAndGlyphs">Peter Sik</text>
<text x="1596.0" y="359.3" font-size="13.5" fill="#3d4757" textLength="68.0" lengthAdjust="spacingAndGlyphs">Ray Manta</text>
<text x="1697.1" y="359.3" font-size="13.5" fill="#3d4757" textLength="65.8" lengthAdjust="spacingAndGlyphs">Santi Argo</text>
<text x="983.0" y="410.5" font-size="13.5" fill="#3d4757" textLength="75.9" lengthAdjust="spacingAndGlyphs">Smith Jones</text>
<text x="1092.3" y="410.5" font-size="13.5" fill="#3d4757" textLength="84.6" lengthAdjust="spacingAndGlyphs">William Harris</text>
<text x="1210.4" y="410.5" font-size="13.5" fill="#3d4757" textLength="103.6" lengthAdjust="spacingAndGlyphs">Wilson Anderson</text>
<text x="977.8" y="446.3" font-size="13.5" fill="#36363c" textLength="73.0" lengthAdjust="spacingAndGlyphs" stroke="#36363c" stroke-width="0.3">Team Lead:</text>
<text x="982.8" y="488.6" font-size="13.5" fill="#3d4757" textLength="81.7" lengthAdjust="spacingAndGlyphs">David Wilson</text>
<text x="1097.1" y="488.6" font-size="13.5" fill="#3d4757" textLength="67.9" lengthAdjust="spacingAndGlyphs">Denise Kirk</text>
<text x="1199.0" y="488.6" font-size="13.5" fill="#3d4757" textLength="67.8" lengthAdjust="spacingAndGlyphs">Mark Ateer</text>
<text x="1300.3" y="488.6" font-size="13.5" fill="#3d4757" textLength="81.8" lengthAdjust="spacingAndGlyphs">Martin Brown</text>
<text x="1415.4" y="488.6" font-size="13.5" fill="#3d4757" textLength="59.9" lengthAdjust="spacingAndGlyphs">Olive Yew</text>
<text x="1508.9" y="488.6" font-size="13.5" fill="#3d4757" textLength="53.7" lengthAdjust="spacingAndGlyphs">Peter Sik</text>
<text x="1596.0" y="488.6" font-size="13.5" fill="#3d4757" textLength="68.0" lengthAdjust="spacingAndGlyphs">Ray Manta</text>
<text x="1697.1" y="488.6" font-size="13.5" fill="#3d4757" textLength="65.8" lengthAdjust="spacingAndGlyphs">Santi Argo</text>
<text x="983.0" y="539.8" font-size="13.5" fill="#3d4757" textLength="75.9" lengthAdjust="spacingAndGlyphs">Smith Jones</text>
<text x="1092.3" y="539.8" font-size="13.5" fill="#3d4757" textLength="84.6" lengthAdjust="spacingAndGlyphs">William Harris</text>
<text x="1210.4" y="539.8" font-size="13.5" fill="#3d4757" textLength="103.6" lengthAdjust="spacingAndGlyphs">Wilson Anderson</text>
<text x="977.8" y="575.6" font-size="13.5" fill="#36363c" textLength="68.0" lengthAdjust="spacingAndGlyphs" stroke="#36363c" stroke-width="0.3">Developer:</text>
<text x="982.8" y="617.9" font-size="13.5" fill="#3d4757" textLength="81.7" lengthAdjust="spacingAndGlyphs">David Wilson</text>
<text x="1097.1" y="617.9" font-size="13.5" fill="#3d4757" textLength="67.9" lengthAdjust="spacingAndGlyphs">Denise Kirk</text>
<text x="1199.0" y="617.9" font-size="13.5" fill="#3d4757" textLength="67.8" lengthAdjust="spacingAndGlyphs">Mark Ateer</text>
<text x="1300.3" y="617.9" font-size="13.5" fill="#3d4757" textLength="81.8" lengthAdjust="spacingAndGlyphs">Martin Brown</text>
<text x="1415.4" y="617.9" font-size="13.5" fill="#3d4757" textLength="59.9" lengthAdjust="spacingAndGlyphs">Olive Yew</text>
<text x="1508.9" y="617.9" font-size="13.5" fill="#3d4757" textLength="53.7" lengthAdjust="spacingAndGlyphs">Peter Sik</text>
<text x="1596.0" y="617.9" font-size="13.5" fill="#3d4757" textLength="68.0" lengthAdjust="spacingAndGlyphs">Ray Manta</text>
<text x="1697.1" y="617.9" font-size="13.5" fill="#3d4757" textLength="65.8" lengthAdjust="spacingAndGlyphs">Santi Argo</text>
<text x="983.0" y="669.1" font-size="13.5" fill="#3d4757" textLength="75.9" lengthAdjust="spacingAndGlyphs">Smith Jones</text>
<text x="1092.3" y="669.1" font-size="13.5" fill="#3d4757" textLength="84.6" lengthAdjust="spacingAndGlyphs">William Harris</text>
<text x="1210.4" y="669.1" font-size="13.5" fill="#3d4757" textLength="103.6" lengthAdjust="spacingAndGlyphs">Wilson Anderson</text>
<text x="977.8" y="704.9" font-size="13.5" fill="#36363c" textLength="131.7" lengthAdjust="spacingAndGlyphs" stroke="#36363c" stroke-width="0.3">Project Adminstrator:</text>
<text x="982.8" y="747.2" font-size="13.5" fill="#3d4757" textLength="81.7" lengthAdjust="spacingAndGlyphs">David Wilson</text>
<text x="1097.1" y="747.2" font-size="13.5" fill="#3d4757" textLength="67.9" lengthAdjust="spacingAndGlyphs">Denise Kirk</text>
<text x="1199.0" y="747.2" font-size="13.5" fill="#3d4757" textLength="67.8" lengthAdjust="spacingAndGlyphs">Mark Ateer</text>
<text x="1300.3" y="747.2" font-size="13.5" fill="#3d4757" textLength="81.8" lengthAdjust="spacingAndGlyphs">Martin Brown</text>
<text x="1415.4" y="747.2" font-size="13.5" fill="#3d4757" textLength="59.9" lengthAdjust="spacingAndGlyphs">Olive Yew</text>
<text x="1508.9" y="747.2" font-size="13.5" fill="#3d4757" textLength="53.7" lengthAdjust="spacingAndGlyphs">Peter Sik</text>
<text x="1596.0" y="747.2" font-size="13.5" fill="#3d4757" textLength="68.0" lengthAdjust="spacingAndGlyphs">Ray Manta</text>
<text x="1697.1" y="747.2" font-size="13.5" fill="#3d4757" textLength="65.8" lengthAdjust="spacingAndGlyphs">Santi Argo</text>
<text x="983.0" y="798.4" font-size="13.5" fill="#3d4757" textLength="75.9" lengthAdjust="spacingAndGlyphs">Smith Jones</text>
<text x="1092.3" y="798.4" font-size="13.5" fill="#3d4757" textLength="84.6" lengthAdjust="spacingAndGlyphs">William Harris</text>
<text x="1210.4" y="798.4" font-size="13.5" fill="#3d4757" textLength="103.6" lengthAdjust="spacingAndGlyphs">Wilson Anderson</text>
<text x="977.8" y="834.2" font-size="13.5" fill="#36363c" textLength="63.7" lengthAdjust="spacingAndGlyphs" stroke="#36363c" stroke-width="0.3">QA Tester:</text>
<text x="983.2" y="876.5" font-size="13.5" fill="#3d4757" textLength="65.4" lengthAdjust="spacingAndGlyphs">Ava Turner</text>
<text x="1081.7" y="876.5" font-size="13.5" fill="#3d4757" textLength="81.7" lengthAdjust="spacingAndGlyphs">David Wilson</text>
<text x="1197.0" y="876.5" font-size="13.5" fill="#3d4757" textLength="67.9" lengthAdjust="spacingAndGlyphs">Denise Kirk</text>
<text x="1298.0" y="876.5" font-size="13.5" fill="#3d4757" textLength="81.6" lengthAdjust="spacingAndGlyphs">Lam Williams</text>
<text x="1413.0" y="876.5" font-size="13.5" fill="#3d4757" textLength="67.8" lengthAdjust="spacingAndGlyphs">Mark Ateer</text>
<text x="1514.5" y="876.5" font-size="13.5" fill="#3d4757" textLength="81.8" lengthAdjust="spacingAndGlyphs">Martin Brown</text>
<text x="1629.1" y="876.5" font-size="13.5" fill="#3d4757" textLength="59.9" lengthAdjust="spacingAndGlyphs">Olive Yew</text>
<text x="1722.9" y="876.5" font-size="13.5" fill="#3d4757" textLength="53.7" lengthAdjust="spacingAndGlyphs">Peter Sik</text>
<text x="982.9" y="927.7" font-size="13.5" fill="#3d4757" textLength="68.0" lengthAdjust="spacingAndGlyphs">Ray Manta</text>
<text x="1083.7" y="927.7" font-size="13.5" fill="#3d4757" textLength="65.8" lengthAdjust="spacingAndGlyphs">Santi Argo</text>
<text x="1183.2" y="927.7" font-size="13.5" fill="#3d4757" textLength="84.6" lengthAdjust="spacingAndGlyphs">William Harris</text>
<text x="1301.3" y="927.7" font-size="13.5" fill="#3d4757" textLength="103.6" lengthAdjust="spacingAndGlyphs">Wilson Anderson</text>
<text x="4" y="958" font-size="11" fill="#5d6470" textLength="420" lengthAdjust="spacingAndGlyphs">lhtlps:/ldemo.redmineflux.com/projects/resource-management/overview?id=</text>
</svg>
</body></html>
